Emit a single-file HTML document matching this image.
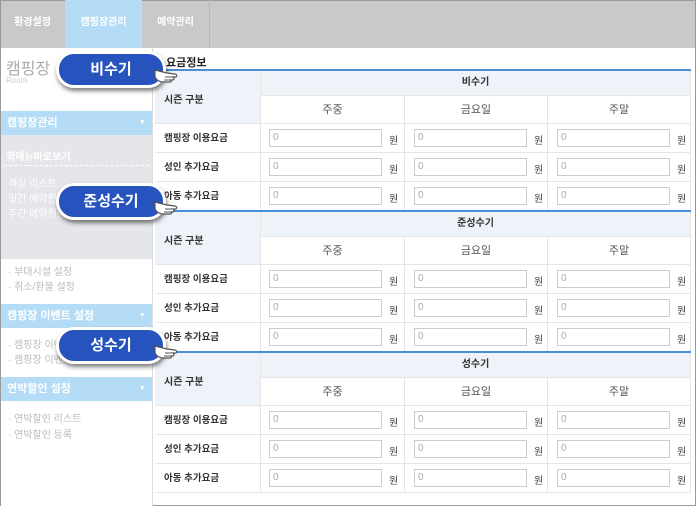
<!DOCTYPE html><html><head><meta charset="utf-8"><style>
*{margin:0;padding:0;box-sizing:border-box}
body{width:696px;height:506px;position:relative;overflow:hidden;background:#fff;font-family:"Liberation Sans","Noto Sans CJK KR",sans-serif;font-size:10px;color:#333}
.a{position:absolute}
.nav{left:0;top:0;width:696px;height:48px;background:#c9c9c9;border:1px solid #999;border-bottom:none}
.tab{top:0;height:48px;line-height:46px;color:#fff;font-weight:bold;font-size:10px;text-align:center}
.side{left:0;top:48px;width:153px;height:458px;border-left:1px solid #999;border-right:1px solid #ddd;background:#fff}
.bar{left:1px;width:151px;height:24px;background:#b5dcf6;color:#fff;font-weight:bold;font-size:11px;line-height:24px;padding-left:6px}
.bar:after{content:"▾";position:absolute;right:8px;font-size:7px;color:#fff}
.it{left:8px;color:#bbb;font-size:10px}
.sec{left:155px;width:536px;height:141px}
.line{left:0;top:0;width:536px;height:2px;background:#4a8fd8}
.cell{border-right:1px solid #e6e6e6;border-bottom:1px solid #e6e6e6}
.lab{left:0;width:106px;background:#eef3f9}
.inp{height:18px;border:1px solid #ccc;background:#fff;color:#aaa;font-size:10px;line-height:16px;padding-left:3px}
.won{font-size:10px;color:#444}
.pill{left:56px;width:110px;height:37px;border-radius:18px;background:#2653bd;border:3px solid #fff;box-shadow:1px 3px 4px rgba(0,0,0,.5);color:#fff;font-weight:bold;font-size:15px;text-align:center;line-height:31px}
</style></head><body>
<div class="a nav"></div>
<div class="a tab" style="left:0;width:65px">환경설정</div>
<div class="a tab" style="left:65px;width:77px;background:#b5dcf6">캠핑장관리</div>
<div class="a tab" style="left:142px;width:68px;border-right:1px solid #b8b8b8">예약관리</div>
<div class="a" style="right:0;top:0;width:1px;height:506px;background:#999"></div>
<div class="a" style="left:0;bottom:0;width:696px;height:1px;background:#999"></div>
<div class="a side"></div>
<div class="a" style="left:6px;top:55px;font-size:16px;color:#aaa">캠핑장</div>
<div class="a" style="left:6px;top:76px;font-size:8px;color:#ccc">Room</div>
<div class="a bar" style="top:111px">캠핑장관리</div>
<div class="a" style="left:1px;top:135px;width:151px;height:124px;background:#e4e6ea"></div>
<div class="a" style="left:6px;top:148px;color:#fff;font-weight:bold;font-size:10px">퀵메뉴바로보기</div>
<div class="a" style="left:4px;top:165px;width:145px;border-top:1px dashed #fff"></div>
<div class="a it" style="top:175px;color:#fff">객실 리스트</div>
<div class="a it" style="top:190px;color:#fff">일간 예약현황</div>
<div class="a it" style="top:205px;color:#fff">주간 예약현황</div>
<div class="a it" style="top:263px">· 부대시설 설정</div>
<div class="a it" style="top:278px">· 취소/환불 설정</div>
<div class="a bar" style="top:304px">캠핑장 이벤트 설정</div>
<div class="a it" style="top:336px">· 캠핑장 이벤트</div>
<div class="a it" style="top:351px">· 캠핑장 이벤트</div>
<div class="a bar" style="top:377px">연박할인 설정</div>
<div class="a it" style="top:410px">· 연박할인 리스트</div>
<div class="a it" style="top:426px">· 연박할인 등록</div>
<div class="a" style="left:166px;top:54px;font-weight:bold;font-size:11px;color:#222">요금정보</div>

<div id="secs"></div>
<script>
var tops=[69,210,351],names=["비수기","준성수기","성수기"],rl=["캠핑장 이용요금","성인 추가요금","아동 추가요금"];
var h="";
tops.forEach(function(t,i){
h+='<div class="a sec" style="top:'+t+'px">';
h+='<div class="a lab cell" style="top:0;height:55px;padding:22px 0 0 9px;font-weight:bold">시즌 구분</div>';
h+='<div class="a cell" style="left:106px;top:0;width:430px;height:27px;background:#eef3f9;text-align:center;line-height:27px;font-weight:bold">'+names[i]+'</div>';
var cx=[106,250,393],cw=[144,143,143],cn=["주중","금요일","주말"];
for(var c=0;c<3;c++)h+='<div class="a cell" style="left:'+cx[c]+'px;top:27px;width:'+cw[c]+'px;height:28px;text-align:center;line-height:28px;font-size:11px;color:#555">'+cn[c]+'</div>';
for(var r=0;r<3;r++){var y=55+r*29;
h+='<div class="a lab cell" style="top:'+y+'px;height:29px;background:#fff;line-height:29px;padding-left:9px;font-weight:bold;font-size:9.5px">'+rl[r]+'</div>';
var ix=[114,259,402];
for(var c=0;c<3;c++){h+='<div class="a cell" style="left:'+cx[c]+'px;top:'+y+'px;width:'+cw[c]+'px;height:29px"></div>';
h+='<div class="a inp" style="left:'+ix[c]+'px;top:'+(y+5)+'px;width:113px">0</div>';
h+='<div class="a won" style="left:'+(ix[c]+120)+'px;top:'+(y+8)+'px">원</div>';}}
h+='<div class="a line"></div></div>';
});
document.getElementById("secs").innerHTML=h;
</script>
<div class="a pill" style="top:51px">비수기</div>
<div class="a pill" style="top:183px">준성수기</div>
<div class="a pill" style="top:327px">성수기</div>
<svg class="a" style="left:153px;top:64px" width="26" height="22" viewBox="0 0 26 22"><path d="M2 6 L14 9 L22 10 Q25 11 23 13 L20 13 Q22 15 20 16 L18 16 Q19 18 17 18 L9 18 Q4 17 2 13 Z" fill="#fff" stroke="#555" stroke-width="1.2"/><path d="M12 13 L20 13 M11 16 L18 16" stroke="#555" stroke-width="1"/></svg>
<svg class="a" style="left:153px;top:196px" width="26" height="22" viewBox="0 0 26 22"><path d="M2 6 L14 9 L22 10 Q25 11 23 13 L20 13 Q22 15 20 16 L18 16 Q19 18 17 18 L9 18 Q4 17 2 13 Z" fill="#fff" stroke="#555" stroke-width="1.2"/><path d="M12 13 L20 13 M11 16 L18 16" stroke="#555" stroke-width="1"/></svg>
<svg class="a" style="left:153px;top:340px" width="26" height="22" viewBox="0 0 26 22"><path d="M2 6 L14 9 L22 10 Q25 11 23 13 L20 13 Q22 15 20 16 L18 16 Q19 18 17 18 L9 18 Q4 17 2 13 Z" fill="#fff" stroke="#555" stroke-width="1.2"/><path d="M12 13 L20 13 M11 16 L18 16" stroke="#555" stroke-width="1"/></svg>
</body></html>
